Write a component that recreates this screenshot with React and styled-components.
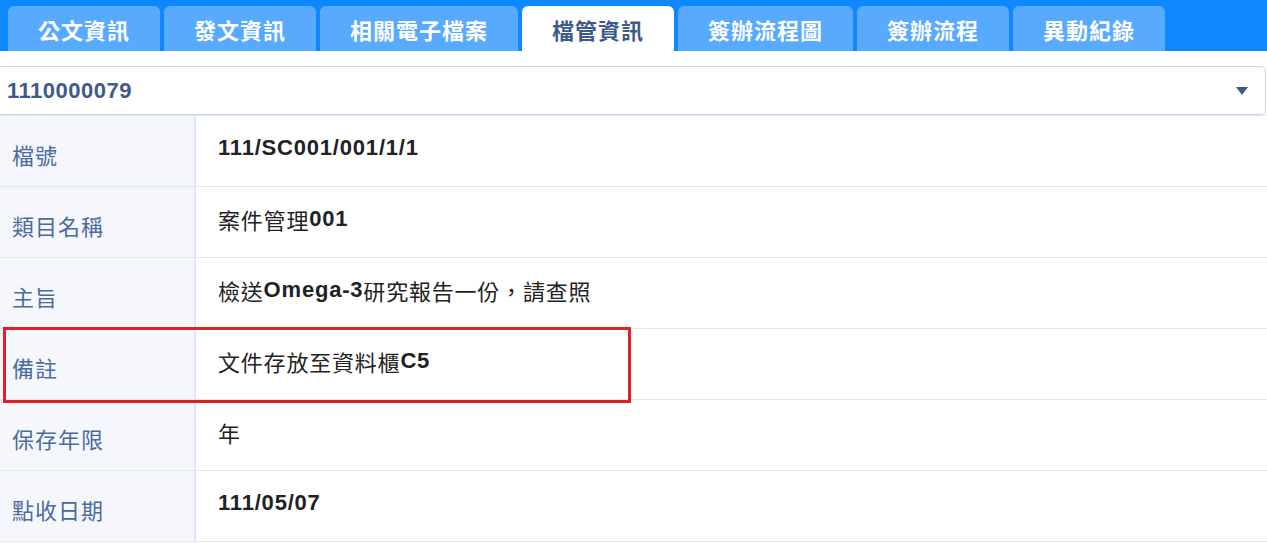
import React from 'react';
import styled, { createGlobalStyle } from 'styled-components';

const GlobalStyle = createGlobalStyle`
  html, body {
    margin: 0;
    padding: 0;
    background: #fff;
    overflow: hidden;
  }
  body {
    font-family: "Liberation Sans", "Noto Sans CJK TC", sans-serif;
  }
`;

const Page = styled.div`
  width: 1267px;
`;

const TabBar = styled.div`
  display: flex;
  gap: 4px;
  padding: 6px 0 0 8px;
  background-color: #0f87fe;
  height: 45px;
`;

const Tab = styled.div`
  display: flex;
  align-items: center;
  justify-content: center;
  padding: 0 30px;
  border-radius: 6px 6px 0 0;
  font-size: 22px;
  font-weight: bold;
  letter-spacing: 1px;
  background-color: ${(p) => (p.$active ? '#fff' : '#58aafe')};
  color: ${(p) => (p.$active ? '#3e5a8c' : '#fff')};
`;

const Picker = styled.div`
  display: flex;
  align-items: center;
  justify-content: space-between;
  height: 47px;
  margin: 15px 1px 0 -4px;
  padding: 0 17px 0 10px;
  border: 1px solid #c9d5ea;
  border-radius: 5px;
  color: #3e5a8c;
  font-size: 22px;
  font-weight: bold;
  letter-spacing: 0.5px;
`;

const Table = styled.div`
  border-top: 1px solid #dfe7f5;
`;

const Row = styled.div`
  position: relative;
  display: grid;
  grid-template-columns: 196px 1fr;
  height: 70px;
  border-bottom: 1px solid #dfe7f5;
`;

const Label = styled.div`
  display: flex;
  align-items: center;
  padding: 5px 0 0 12px;
  background-color: #f5f7fd;
  border-right: 2px solid #dfe7f5;
  color: #4b6b9f;
  font-size: 22px;
  letter-spacing: 1px;
`;

const Value = styled.div`
  display: flex;
  align-items: center;
  padding: 0 0 6px 22px;
  color: #222;
  font-size: 22px;
  letter-spacing: 0.8px;
  white-space: pre;
`;

const Latin = styled.span`
  font-weight: bold;
`;

const Highlight = styled.div`
  position: absolute;
  z-index: 2;
  top: -2px;
  left: 3px;
  width: 622px;
  height: 70px;
  border: 3px solid #e41e26;
  pointer-events: none;
`;

const tabs = ['公文資訊', '發文資訊', '相關電子檔案', '檔管資訊', '簽辦流程圖', '簽辦流程', '異動紀錄'];

const rows = [
  { label: '檔號', value: [['111/SC001/001/1/1', true]] },
  { label: '類目名稱', value: [['案件管理'], ['001', true]] },
  { label: '主旨', value: [['檢送'], ['Omega-3', true], ['研究報告一份，請查照']] },
  { label: '備註', value: [['文件存放至資料櫃'], ['C5', true]], marked: true },
  { label: '保存年限', value: [['年']] },
  { label: '點收日期', value: [['111/05/07', true]] },
];

const Caret = () => (
  <svg width="12" height="8" viewBox="0 0 12 8">
    <path d="M0 0 H12 L6 8 Z" fill="#3e5a8c" />
  </svg>
);

const App = () => (
  <Page lang="zh-Hant">
    <GlobalStyle />
    <TabBar>
      {tabs.map((t) => (
        <Tab key={t} $active={t === '檔管資訊'}>{t}</Tab>
      ))}
    </TabBar>
    <Picker>
      <span>1110000079</span>
      <Caret />
    </Picker>
    <Table>
      {rows.map((r) => (
        <Row key={r.label}>
          <Label>{r.label}</Label>
          <Value>
            {r.value.map(([text, bold], i) =>
              bold ? <Latin key={i}>{text}</Latin> : <span key={i}>{text}</span>
            )}
          </Value>
          {r.marked && <Highlight />}
        </Row>
      ))}
    </Table>
  </Page>
);

export default App;
